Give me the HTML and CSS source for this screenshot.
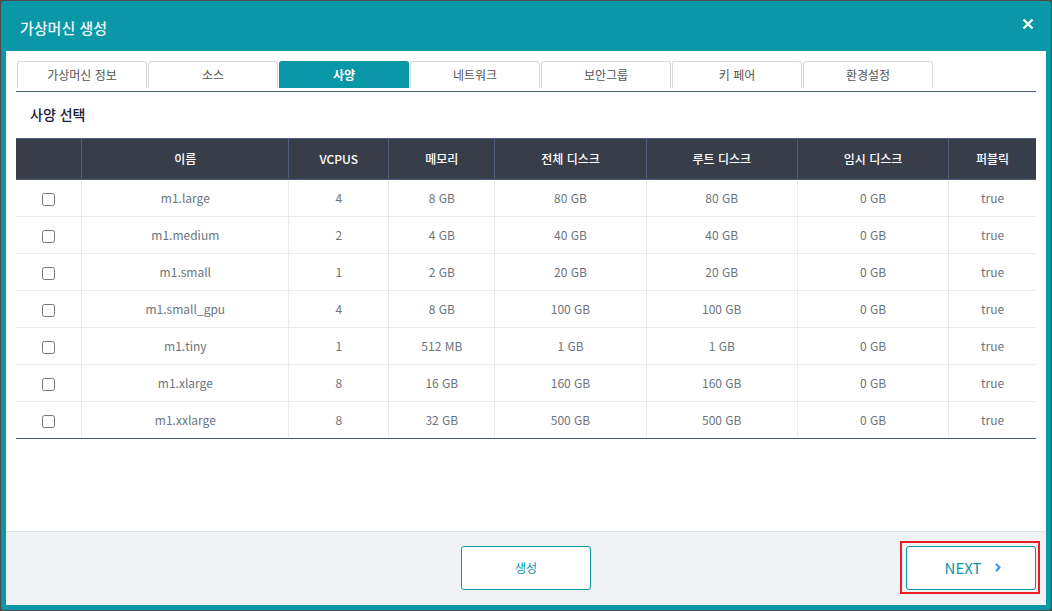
FILE: index.html
```
<!DOCTYPE html>
<html lang="ko">
<head>
<meta charset="utf-8">
<title>가상머신 생성</title>
<link rel="stylesheet" href="styles.css">
</head>
<body>
<div class="modal" role="dialog" aria-labelledby="modal-title">
  <header class="modal-header">
    <h1 class="modal-title" id="modal-title">가상머신 생성</h1>
    <button class="close" type="button" aria-label="닫기">
      <svg width="12" height="12" viewBox="0 0 12 12" aria-hidden="true"><path d="M1.5 1.5 10.5 10.5M10.5 1.5 1.5 10.5" fill="none" stroke="#fff" stroke-width="2.3"/></svg>
    </button>
  </header>
  <main class="modal-body">
    <nav class="tabs">
      <button class="tab" type="button">가상머신 정보</button>
      <button class="tab" type="button">소스</button>
      <button class="tab active" type="button">사양</button>
      <button class="tab" type="button">네트워크</button>
      <button class="tab" type="button">보안그룹</button>
      <button class="tab" type="button">키 페어</button>
      <button class="tab" type="button">환경설정</button>
    </nav>
    <h2 class="section-title">사양 선택</h2>
    <table class="flavors">
      <colgroup>
        <col class="c-check"><col class="c-name"><col class="c-cpu"><col class="c-mem"><col class="c-disk"><col class="c-disk"><col class="c-disk"><col class="c-public">
      </colgroup>
      <thead>
        <tr><th></th><th>이름</th><th>VCPUS</th><th>메모리</th><th>전체 디스크</th><th>루트 디스크</th><th>임시 디스크</th><th>퍼블릭</th></tr>
      </thead>
      <tbody>
        <tr><td><input type="checkbox" aria-label="m1.large"></td><td>m1.large</td><td>4</td><td>8 GB</td><td>80 GB</td><td>80 GB</td><td>0 GB</td><td>true</td></tr>
        <tr><td><input type="checkbox" aria-label="m1.medium"></td><td>m1.medium</td><td>2</td><td>4 GB</td><td>40 GB</td><td>40 GB</td><td>0 GB</td><td>true</td></tr>
        <tr><td><input type="checkbox" aria-label="m1.small"></td><td>m1.small</td><td>1</td><td>2 GB</td><td>20 GB</td><td>20 GB</td><td>0 GB</td><td>true</td></tr>
        <tr><td><input type="checkbox" aria-label="m1.small_gpu"></td><td>m1.small_gpu</td><td>4</td><td>8 GB</td><td>100 GB</td><td>100 GB</td><td>0 GB</td><td>true</td></tr>
        <tr><td><input type="checkbox" aria-label="m1.tiny"></td><td>m1.tiny</td><td>1</td><td>512 MB</td><td>1 GB</td><td>1 GB</td><td>0 GB</td><td>true</td></tr>
        <tr><td><input type="checkbox" aria-label="m1.xlarge"></td><td>m1.xlarge</td><td>8</td><td>16 GB</td><td>160 GB</td><td>160 GB</td><td>0 GB</td><td>true</td></tr>
        <tr><td><input type="checkbox" aria-label="m1.xxlarge"></td><td>m1.xxlarge</td><td>8</td><td>32 GB</td><td>500 GB</td><td>500 GB</td><td>0 GB</td><td>true</td></tr>
      </tbody>
    </table>
  </main>
  <footer class="modal-footer">
    <button class="btn create" type="button">생성</button>
    <div class="next-wrap">
      <button class="btn next" type="button">NEXT
        <svg width="6" height="9" viewBox="0 0 6 9" aria-hidden="true"><path d="M1 1 4.5 4.5 1 8" fill="none" stroke="#3f8cff" stroke-width="2"/></svg>
      </button>
    </div>
  </footer>
</div>
</body>
</html>
```
FILE: styles.css
```
* {
  box-sizing: border-box;
}

body {
  margin: 0;
  min-height: 100vh;
  display: flex;
  padding: 1px;
  background: #4b4b4b;
  font-family: "Noto Sans CJK KR", "Noto Sans", sans-serif;
  font-size: 12px;
}

button {
  font: inherit;
  padding: 0;
  cursor: pointer;
}

.modal {
  flex: 1;
  display: flex;
  flex-direction: column;
  padding: 0 5px 5px;
  border-radius: 3px;
  background: #0a97a7;
}

.modal-header {
  display: flex;
  align-items: center;
  justify-content: space-between;
  height: 50px;
  padding: 0 12px 0 14px;
}

.modal-title {
  margin: 4px 0 0;
  font-size: 15px;
  font-weight: 500;
  line-height: 20px;
  color: #f0f8fa;
}

.close {
  display: flex;
  margin-bottom: 4px;
  border: 0;
  background: none;
}

.modal-body {
  flex: 1;
  padding: 10px 10px 0;
  background: #fff;
}

.tabs {
  display: flex;
  gap: 1px;
  padding: 0 1px 3px;
  border-bottom: 1px solid #505b80;
}

.tab {
  width: 130px;
  height: 27px;
  padding-bottom: 1px;
  border: 1px solid #d9d9d9;
  border-bottom: 0;
  border-radius: 3px 3px 0 0;
  background: #fff;
  color: #555;
}

.tab.active {
  padding-bottom: 2px;
  border-color: #0a97a7;
  background: #0a97a7;
  color: #fff;
  font-weight: 700;
}

.section-title {
  margin: 0;
  padding: 12px 14px 14px;
  font-size: 14px;
  font-weight: 500;
  line-height: 20px;
  color: #172039;
}

.flavors {
  width: 100%;
  table-layout: fixed;
  border-collapse: separate;
  border-spacing: 0;
  border-bottom: 1px solid #505b80;
  text-align: center;
  color: #6c757d;
}

.c-check { width: 6.5%; }
.c-name { width: 20.3%; }
.c-cpu { width: 9.8%; }
.c-mem { width: 10.4%; }
.c-disk { width: 14.83%; }
.c-public { width: 8.51%; }

.flavors th {
  height: 42px;
  padding: 0 0 1px;
  border: 1px solid #505f80;
  border-left: 0;
  background: #383e49;
  font-weight: 500;
  color: #fff;
}

.flavors td {
  height: 37px;
  padding: 0 0 2px;
  border-right: 1px solid #ebebeb;
  border-bottom: 1px solid #ebebeb;
}

.flavors th:last-child,
.flavors td:last-child {
  border-right: 0;
}

.flavors tr:last-child td {
  height: 36px;
  border-bottom: 0;
}

.flavors input {
  display: block;
  margin: 4px auto 0;
}

.modal-footer {
  display: grid;
  grid-template-columns: 1fr auto 1fr;
  align-items: center;
  padding: 14px 10px 15px;
  border-top: 1px solid #dee2e6;
  background: #eff3f6;
}

.btn {
  width: 130px;
  height: 44px;
  padding-bottom: 1px;
  border: 1px solid #0a97a7;
  border-radius: 3px;
  background: #fff;
  color: #0a97a7;
}

.create {
  grid-column: 2;
}

.next-wrap {
  position: relative;
  justify-self: end;
}

.next-wrap::after {
  content: "";
  position: absolute;
  inset: -5px -4px -4px -6px;
  border: 2px solid #ed1c24;
  pointer-events: none;
}

.next {
  display: flex;
  align-items: center;
  justify-content: center;
  gap: 14px;
  padding-left: 4px;
  font-size: 15px;
}
```
